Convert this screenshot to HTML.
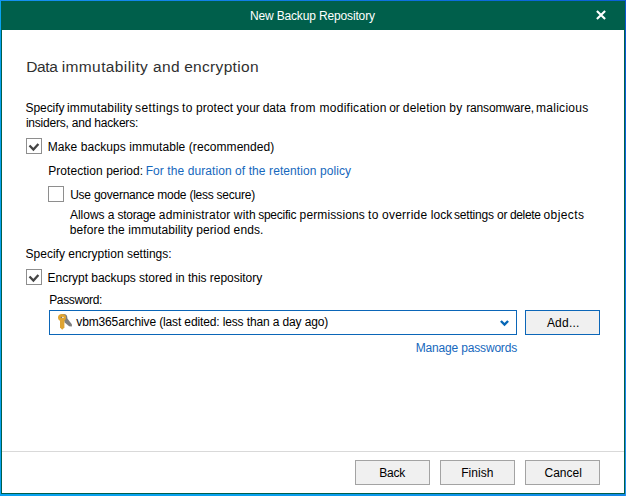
<!DOCTYPE html>
<html><head><meta charset="utf-8">
<style>
html,body{margin:0;padding:0;}
body{width:626px;height:496px;position:relative;overflow:hidden;background:linear-gradient(to right,#08a2f0 0%,#08a2f0 40%,#1388e8 100%);font-family:"Liberation Sans",sans-serif;font-size:12px;color:#000;}
.abs{position:absolute;white-space:nowrap;}
#topedge{position:absolute;left:0;top:0;width:626px;height:1px;background:linear-gradient(to right,#1592f2,#0b5fd6);}
#rightedge{position:absolute;left:625px;top:0;width:1px;height:496px;background:linear-gradient(to bottom,#0a55cf 0%,#0c6fe0 50%,#2595ef 100%);}
#win{position:absolute;left:1px;top:1px;width:622px;height:492px;background:#fff;border:1px solid #005f4b;border-top:none;}
#title{position:absolute;left:1px;top:1px;width:624px;height:29px;background:#005f4b;}
#ttext{left:0;width:626px;top:2px;height:29px;line-height:29px;text-align:center;color:#fff;font-size:12px;}
.t{line-height:15px;height:15px;}
.w{position:absolute;top:0;}
.cb{position:absolute;width:14px;height:14px;border:1px solid #8e8e8e;background:#fff;}
.link{color:#1668bd;}
.btn{position:absolute;height:22px;padding-top:1px;width:73px;border:1px solid #a3a3a3;background:#f0f0f0;text-align:center;line-height:23px;}
/*FIT*/
#tt{letter-spacing:-0.148px;transform:translateX(-0.63px);}
#p2{letter-spacing:-0.207px;transform:translateX(-0.11px);}
#l1{letter-spacing:0.074px;transform:translateX(-0.32px);}
#l2{letter-spacing:0.053px;transform:translateX(0.19px);}
#l2b{letter-spacing:0.083px;transform:translateX(-0.35px);}
#l3{letter-spacing:-0.244px;transform:translateX(0.19px);}
#l5{letter-spacing:0.098px;transform:translateX(-0.18px);}
#l6{letter-spacing:-0.005px;transform:translateX(-0.38px);}
#l7{letter-spacing:-0.037px;transform:translateX(-0.42px);}
#l8{letter-spacing:-0.358px;transform:translateX(0.18px);}
#l9{letter-spacing:-0.131px;transform:translateX(-0.74px);}
#l10{letter-spacing:-0.178px;transform:translateX(-0.20px);}
#add{letter-spacing:0.217px;transform:translateX(0.72px);}
#b1{letter-spacing:-0.244px;transform:translateX(-0.30px);}
#b2{letter-spacing:0.025px;transform:translateX(-0.18px);}
#b3{letter-spacing:-0.021px;transform:translateX(0.67px);}
#p1w0{letter-spacing:-0.075px;transform:translateX(-0.44px);}
#p1w1{letter-spacing:0.166px;transform:translateX(-1.04px);}
#p1w2{letter-spacing:0.357px;transform:translateX(-0.89px);}
#p1w3{letter-spacing:0.400px;transform:translateX(-0.06px);}
#p1w4{letter-spacing:0.080px;transform:translateX(-1.09px);}
#p1w5{letter-spacing:-0.045px;transform:translateX(-0.43px);}
#p1w6{letter-spacing:-0.056px;transform:translateX(-0.28px);}
#p1w7{letter-spacing:0.400px;transform:translateX(0.25px);}
#p1w8{letter-spacing:0.257px;transform:translateX(-0.43px);}
#p1w9{letter-spacing:-0.360px;transform:translateX(-0.63px);}
#p1w10{letter-spacing:0.153px;transform:translateX(-1.13px);}
#p1w11{letter-spacing:0.400px;transform:translateX(-0.71px);}
#p1w12{letter-spacing:-0.156px;transform:translateX(-0.82px);}
#p1w13{letter-spacing:0.295px;transform:translateX(-1.08px);}
#l4w0{letter-spacing:0.009px;transform:translateX(-0.11px);}
#l4w1{letter-spacing:0.000px;transform:translateX(-0.33px);}
#l4w2{letter-spacing:-0.333px;transform:translateX(-0.38px);}
#l4w3{letter-spacing:0.175px;transform:translateX(-0.22px);}
#l4w4{letter-spacing:0.151px;transform:translateX(-0.17px);}
#l4w5{letter-spacing:-0.247px;transform:translateX(-0.85px);}
#l4w6{letter-spacing:0.117px;transform:translateX(-0.40px);}
#l4w7{letter-spacing:0.400px;transform:translateX(0.08px);}
#l4w8{letter-spacing:0.272px;transform:translateX(-1.07px);}
#l4w9{letter-spacing:0.042px;transform:translateX(-1.19px);}
#l4w10{letter-spacing:-0.186px;transform:translateX(-1.05px);}
#l4w11{letter-spacing:-0.360px;transform:translateX(-0.88px);}
#l4w12{letter-spacing:-0.360px;transform:translateX(-2.02px);}
#l4w13{letter-spacing:0.400px;transform:translateX(-0.49px);}
#h1w0{letter-spacing:-0.360px;transform:translateX(-0.87px);}
#h1w1{letter-spacing:0.400px;transform:translateX(-1.36px);}
#h1w2{letter-spacing:0.400px;transform:translateX(0.04px);}
#h1w3{letter-spacing:0.324px;transform:translateX(-0.85px);}
#tt,#add,#b1,#b2,#b3{display:inline-block;}
/*ENDFIT*/
</style></head><body>
<div id="topedge"></div><div id="rightedge"></div>
<div id="win"></div>
<div id="title"></div>
<div class="abs" id="ttext"><span id="tt">New Backup Repository</span></div>
<svg class="abs" style="left:596px;top:10px" width="10" height="10" viewBox="0 0 10 10"><path d="M0.9 0.9L9.1 9.1M9.1 0.9L0.9 9.1" stroke="#fff" stroke-width="2.1" fill="none"/></svg>

<div class="abs" id="h1" style="left:26px;top:56px;font-size:15.5px;line-height:22px;color:#303030;"><span class="w" id="h1w0" style="left:1px">Data</span> <span class="w" id="h1w1" style="left:37px">immutability</span> <span class="w" id="h1w2" style="left:127px">and</span> <span class="w" id="h1w3" style="left:159px">encryption</span></div>

<div class="abs t" id="p1" style="left:26px;top:101px;"><span class="w" id="p1w0" style="left:0px">Specify</span> <span class="w" id="p1w1" style="left:42px">immutability</span> <span class="w" id="p1w2" style="left:110px">settings</span> <span class="w" id="p1w3" style="left:156px">to</span> <span class="w" id="p1w4" style="left:171px">protect</span> <span class="w" id="p1w5" style="left:211px">your</span> <span class="w" id="p1w6" style="left:237px">data</span> <span class="w" id="p1w7" style="left:264px">from</span> <span class="w" id="p1w8" style="left:294px">modification</span> <span class="w" id="p1w9" style="left:364px">or</span> <span class="w" id="p1w10" style="left:378px">deletion</span> <span class="w" id="p1w11" style="left:424px">by</span> <span class="w" id="p1w12" style="left:441px">ransomware,</span> <span class="w" id="p1w13" style="left:511px">malicious</span></div>
<div class="abs t" id="p2" style="left:26px;top:116px;">insiders, and hackers:</div>

<div class="cb" style="left:26px;top:138px;"><svg width="14" height="14" viewBox="0 0 14 14" style="display:block"><path d="M2.5 6.5L6.4 10.5L11.4 4.9" stroke="#444" stroke-width="2.3" fill="none"/></svg></div>
<div class="abs t" id="l1" style="left:48px;top:140px;">Make backups immutable (recommended)</div>

<div class="abs t" id="l2" style="left:48px;top:164px;">Protection period:</div>
<div class="abs t link" id="l2b" style="left:146px;top:164px;">For the duration of the retention policy</div>

<div class="cb" style="left:48px;top:186px;"></div>
<div class="abs t" id="l3" style="left:70px;top:188px;">Use governance mode (less secure)</div>
<div class="abs t" id="l4" style="left:70px;top:208px;"><span class="w" id="l4w0" style="left:0px">Allows</span> <span class="w" id="l4w1" style="left:38px">a</span> <span class="w" id="l4w2" style="left:48px">storage</span> <span class="w" id="l4w3" style="left:89px">administrator</span> <span class="w" id="l4w4" style="left:164px">with</span> <span class="w" id="l4w5" style="left:189px">specific</span> <span class="w" id="l4w6" style="left:230px">permissions</span> <span class="w" id="l4w7" style="left:298px">to</span> <span class="w" id="l4w8" style="left:313px">override</span> <span class="w" id="l4w9" style="left:362px">lock</span> <span class="w" id="l4w10" style="left:385px">settings</span> <span class="w" id="l4w11" style="left:428px">or</span> <span class="w" id="l4w12" style="left:442px">delete</span> <span class="w" id="l4w13" style="left:474px">objects</span></div>
<div class="abs t" id="l5" style="left:70px;top:223px;">before the immutability period ends.</div>

<div class="abs t" id="l6" style="left:26px;top:247px;">Specify encryption settings:</div>
<div class="cb" style="left:26px;top:269px;"><svg width="14" height="14" viewBox="0 0 14 14" style="display:block"><path d="M2.5 6.5L6.4 10.5L11.4 4.9" stroke="#444" stroke-width="2.3" fill="none"/></svg></div>
<div class="abs t" id="l7" style="left:48px;top:271px;">Encrypt backups stored in this repository</div>
<div class="abs t" id="l8" style="left:49px;top:293px;">Password:</div>

<div class="abs" id="combo" style="left:49px;top:310px;width:466px;height:23px;border:1px solid #0b66b8;background:#fff;"></div>
<svg class="abs" id="key" style="left:54px;top:311px" width="22" height="22" viewBox="0 0 22 22"><circle cx="9.7" cy="6.5" r="3.6" fill="#7e7e7e"/><path d="M10.4 8L13 7L18 13.5L17.8 15.5L15.1 15.3L10.4 11.3Z" fill="#7e7e7e"/><ellipse cx="8" cy="6.6" rx="4" ry="3.5" fill="#dfa432"/><path d="M6 9L6 16.6L8.2 18.7L10.4 16.6L10.4 9Z" fill="#dfa432"/><ellipse cx="7.6" cy="6.4" rx="0.9" ry="0.55" fill="#7a746a"/><ellipse cx="8.9" cy="6.4" rx="0.9" ry="0.55" fill="#f4efe6"/></svg>
<div class="abs t" id="l9" style="left:77px;top:315px;">vbm365archive (last edited: less than a day ago)</div>
<svg class="abs" style="left:499px;top:319px" width="11" height="8" viewBox="0 0 11 8"><path d="M1.9 2L5.5 5.6L9.1 2" stroke="#0566b6" stroke-width="2.4" fill="none"/></svg>
<div class="btn" style="left:525px;top:310px;border-color:#0b66b8;"><span id="add">Add...</span></div>
<div class="abs t link" id="l10" style="left:416px;top:341px;">Manage passwords</div>

<div class="abs" style="left:2px;top:451px;width:622px;height:1px;background:#d9d9d9;"></div>
<div class="btn" style="left:355px;top:460px;"><span id="b1">Back</span></div>
<div class="btn" style="left:440px;top:460px;"><span id="b2">Finish</span></div>
<div class="btn" style="left:525px;top:460px;"><span id="b3">Cancel</span></div>
</body></html>
